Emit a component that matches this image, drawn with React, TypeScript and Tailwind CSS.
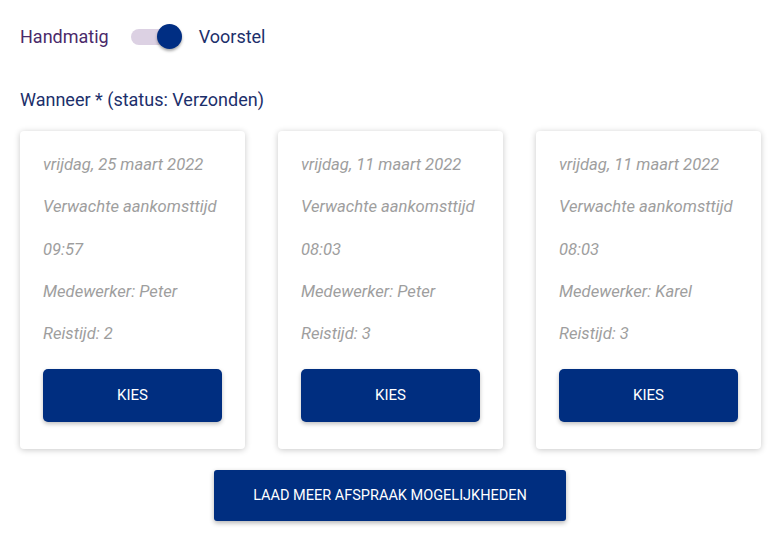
const slots = [
  { date: "vrijdag, 25 maart 2022", time: "09:57", employee: "Peter", travel: 2 },
  { date: "vrijdag, 11 maart 2022", time: "08:03", employee: "Peter", travel: 3 },
  { date: "vrijdag, 11 maart 2022", time: "08:03", employee: "Karel", travel: 3 },
];

function Toggle() {
  return (
    <div className="relative h-[25px] w-[51px]">
      <span className="absolute left-0 top-[5px] h-[16px] w-[40px] rounded-full bg-[#dcd1e3]" />
      <span className="absolute right-0 top-0 h-[25px] w-[25px] rounded-full bg-[#002e83] shadow-[0_2px_3px_rgba(0,0,0,0.35)]" />
    </div>
  );
}

function SlotCard({ slot }: { slot: (typeof slots)[number] }) {
  return (
    <div className="flex w-[225px] shrink-0 flex-col rounded-[4px] bg-white px-[23px] pb-[27px] pt-[24px] shadow-[0_1px_6px_rgba(0,0,0,0.22)]">
      <div className="flex flex-col gap-[22.25px] text-[16.6px] italic leading-[20px] text-[#9e9e9e]">
        <p>{slot.date}</p>
        <p>Verwachte aankomsttijd</p>
        <p>{slot.time}</p>
        <p>Medewerker: {slot.employee}</p>
        <p>Reistijd: {slot.travel}</p>
      </div>
      <button
        type="button"
        className="mt-[25px] h-[53px] w-full rounded-[5px] bg-[#002e80] text-[15px] font-normal text-white shadow-[0_2px_4px_rgba(0,0,0,0.25)]"
      >
        KIES
      </button>
    </div>
  );
}

export default function App() {
  return (
    <div className="min-h-[540px] w-[776px] overflow-hidden bg-white px-[20px] pt-[23px] font-['Roboto',sans-serif]">
      <div className="flex h-[26px] items-center text-[18px]">
        <span className="text-[#4a2a6a]">Handmatig</span>
        <div className="ml-[22px]">
          <Toggle />
        </div>
        <span className="ml-[17px] text-[#1c2f6b]">Voorstel</span>
      </div>

      <p className="mt-[38px] text-[18px] leading-[26px] text-[#1c2f6b]">Wanneer * (status: Verzonden)</p>

      <div className="mt-[18px] flex gap-[33px]">
        {slots.map((slot, i) => (
          <SlotCard key={i} slot={slot} />
        ))}
      </div>

      <div className="mt-[21px] flex pl-[194px]">
        <button
          type="button"
          className="h-[51px] w-[352px] rounded-[3px] bg-[#002e80] text-[14.5px] font-normal text-white shadow-[0_2px_5px_rgba(0,0,0,0.3)]"
        >
          LAAD MEER AFSPRAAK MOGELIJKHEDEN
        </button>
      </div>
    </div>
  );
}
